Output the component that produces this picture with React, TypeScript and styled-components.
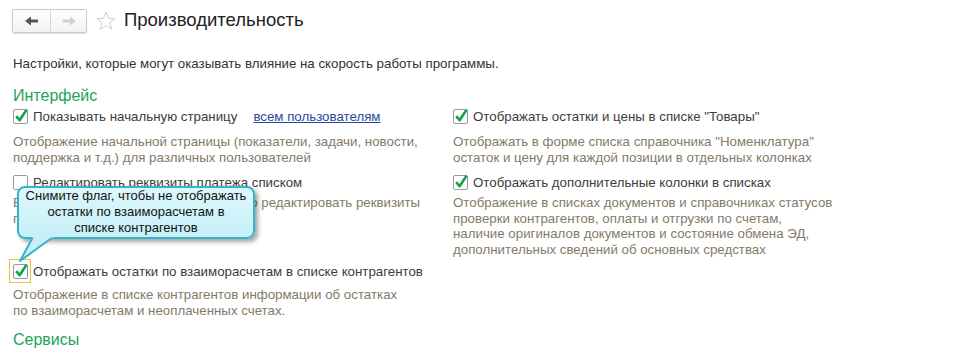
import React from 'react';
import styled, { createGlobalStyle } from 'styled-components';

const Global = createGlobalStyle`
  body {
    margin: 0;
    background: #fff;
    font-family: 'Liberation Sans', Arial, sans-serif;
    font-size: 13.3px;
    color: #3c3c3c;
  }
`;

type Opt = {
  label: string;
  checked: boolean;
  desc: string[];
  link?: string;
  focused?: boolean;
  gap: number;
};

const left: Opt[] = [
  {
    label: 'Показывать начальную страницу',
    checked: true,
    link: 'всем пользователям',
    gap: 10,
    desc: [
      'Отображение начальной страницы (показатели, задачи, новости,',
      'поддержка и т.д.) для различных пользователей',
    ],
  },
  {
    label: 'Редактировать реквизиты платежа списком',
    checked: false,
    gap: 5,
    desc: ['В списке платежных документов можно редактировать реквизиты', 'платежа'],
  },
  {
    label: 'Отображать остатки по взаиморасчетам в списке контрагентов',
    checked: true,
    focused: true,
    gap: 8,
    desc: [
      'Отображение в списке контрагентов информации об остатках',
      'по взаиморасчетам и неоплаченных счетах.',
    ],
  },
];

const right: Opt[] = [
  {
    label: 'Отображать остатки и цены в списке "Товары"',
    checked: true,
    gap: 10,
    desc: [
      'Отображать в форме списка справочника "Номенклатура"',
      'остаток и цену для каждой позиции в отдельных колонках',
    ],
  },
  {
    label: 'Отображать дополнительные колонки в списках',
    checked: true,
    gap: 5,
    desc: [
      'Отображение в списках документов и справочниках статусов',
      'проверки контрагентов, оплаты и отгрузки по счетам,',
      'наличие оригиналов документов и состояние обмена ЭД,',
      'дополнительных сведений об основных средствах',
    ],
  },
];

const Check = ({ checked }: { checked: boolean }) => (
  <svg width="16" height="16" viewBox="0 0 16 16">
    <rect x="0.5" y="1.5" width="14" height="14" rx="1.5" fill="#fff" stroke="#9a9a9a" />
    {checked && (
      <path d="M3.2 8.2 L6.6 12.2 L13.6 1.6" fill="none" stroke="#14a04a" strokeWidth="2.6" strokeLinejoin="round" />
    )}
  </svg>
);

const Option = ({ o }: { o: Opt }) => (
  <Item>
    <CheckRow>
      <Box $focused={!!o.focused}>
        <Check checked={o.checked} />
      </Box>
      <Label>{o.label}</Label>
      {o.link && <Link>{o.link}</Link>}
    </CheckRow>
    <Desc $gap={o.gap}>
      {o.desc.map((d, i) => (
        <div key={i}>{d}</div>
      ))}
    </Desc>
  </Item>
);

export default function App() {
  return (
    <Page>
      <Global />
      <Header>
        <Nav>
          <NavBtn>
            <svg width="14" height="10" viewBox="0 0 14 10">
              <path d="M0 5 L6 0.5 L6 3.5 L13 3.5 L13 6.5 L6 6.5 L6 9.5 Z" fill="#555" />
            </svg>
          </NavBtn>
          <NavBtn $last>
            <svg width="14" height="10" viewBox="0 0 14 10">
              <path d="M14 5 L8 0.5 L8 3.5 L1 3.5 L1 6.5 L8 6.5 L8 9.5 Z" fill="#d2d2d2" />
            </svg>
          </NavBtn>
        </Nav>
        <Star>
          <svg width="20" height="20" viewBox="0 0 20 20">
            <path
              d="M10 1.2 L12.5 7.3 L19 7.6 L13.9 11.7 L15.7 18.3 L10 14.6 L4.3 18.3 L6.1 11.7 L1 7.6 L7.5 7.3 Z"
              fill="none"
              stroke="#cfcfcf"
              strokeWidth="1"
              strokeLinejoin="round"
            />
          </svg>
        </Star>
        <Title>Производительность</Title>
      </Header>
      <Intro>Настройки, которые могут оказывать влияние на скорость работы программы.</Intro>
      <Section>Интерфейс</Section>
      <Grid>
        <Option o={left[0]} />
        <Option o={right[0]} />
        <Option o={left[1]} />
        <Option o={right[1]} />
        <FocusCell>
          <Option o={left[2]} />
          <Tip>
            <Pointer width="40" height="26" viewBox="0 0 40 26">
              <path d="M14 0 L1 24 L34 0" fill="#c8eff7" stroke="#35b4c8" strokeWidth="2" strokeLinejoin="round" />
              <path d="M13 -2 L35 -2" stroke="#c8eff7" strokeWidth="5" />
            </Pointer>
            Снимите флаг, чтобы не отображать
            <br />
            остатки по взаиморасчетам в
            <br />
            списке контрагентов
          </Tip>
        </FocusCell>
      </Grid>
      <Section $bottom>Сервисы</Section>
    </Page>
  );
}

const Page = styled.div`
  padding: 9px 12px 0 13px;
  width: 940px;
  height: 352px;
  box-sizing: border-box;
  overflow: hidden;
`;

const Header = styled.div`
  display: flex;
  align-items: center;
  height: 24px;
  margin-left: -1px;
`;

const Nav = styled.div`
  display: flex;
  border: 1px solid #c9c9c9;
  border-radius: 2px;
  box-shadow: 0 1px 1px rgba(0, 0, 0, 0.12);
  background: linear-gradient(#ffffff, #f2f2f2);
`;

const NavBtn = styled.div<{ $last?: boolean }>`
  width: ${(p) => (p.$last ? '35px' : '37px')};
  height: 22px;
  display: flex;
  align-items: center;
  justify-content: center;
  border-left: ${(p) => (p.$last ? '1px solid #d6d6d6' : 'none')};
`;

const Star = styled.div`
  display: flex;
  margin-left: 9px;
  margin-top: -1px;
`;

const Title = styled.div`
  margin-left: 8px;
  font-size: 18.5px;
  color: #222;
  margin-top: -2px;
`;

const Intro = styled.div`
  margin-top: 23px;
  color: #333;
  line-height: 15px;
`;

const Section = styled.div<{ $bottom?: boolean }>`
  margin-top: ${(p) => (p.$bottom ? '13px' : '16px')};
  font-size: 16px;
  color: #1ea35a;
  line-height: 18px;
`;

const Grid = styled.div`
  display: grid;
  grid-template-columns: 440px 440px;
  row-gap: 9px;
  margin-top: 3px;
`;

const Item = styled.div`
  display: flex;
  flex-direction: column;
`;

const CheckRow = styled.div`
  display: flex;
  align-items: center;
  height: 16px;
`;

const Box = styled.div<{ $focused: boolean }>`
  display: flex;
  margin: -4px 2px -4px -4px;
  padding: 3px 1px 3px 3px;
  border: 1px solid ${(p) => (p.$focused ? '#f0c23c' : 'transparent')};
`;

const Label = styled.span`
  color: #3c3c3c;
`;

const Link = styled.span`
  margin-left: 16px;
  color: #2a4a9e;
  text-decoration: underline;
`;

const Desc = styled.div<{ $gap: number }>`
  margin-top: ${(p) => p.$gap}px;
  color: #857a69;
  line-height: 15.5px;
`;

const FocusCell = styled.div`
  position: relative;
  grid-column: 1;
  margin-top: -3px;
`;

const Tip = styled.div`
  position: absolute;
  left: 4px;
  top: -77px;
  width: 238px;
  height: 53px;
  box-sizing: border-box;
  border: 2px solid #35b4c8;
  border-radius: 8px;
  background: linear-gradient(#dcf8fd, #c8eff7);
  box-shadow: 3px 3px 4px rgba(0, 0, 0, 0.35);
  color: #111;
  font-size: 13px;
  text-align: center;
  line-height: 16px;
`;

const Pointer = styled.svg`
  position: absolute;
  left: 0;
  top: 49px;
  overflow: visible;
`;
